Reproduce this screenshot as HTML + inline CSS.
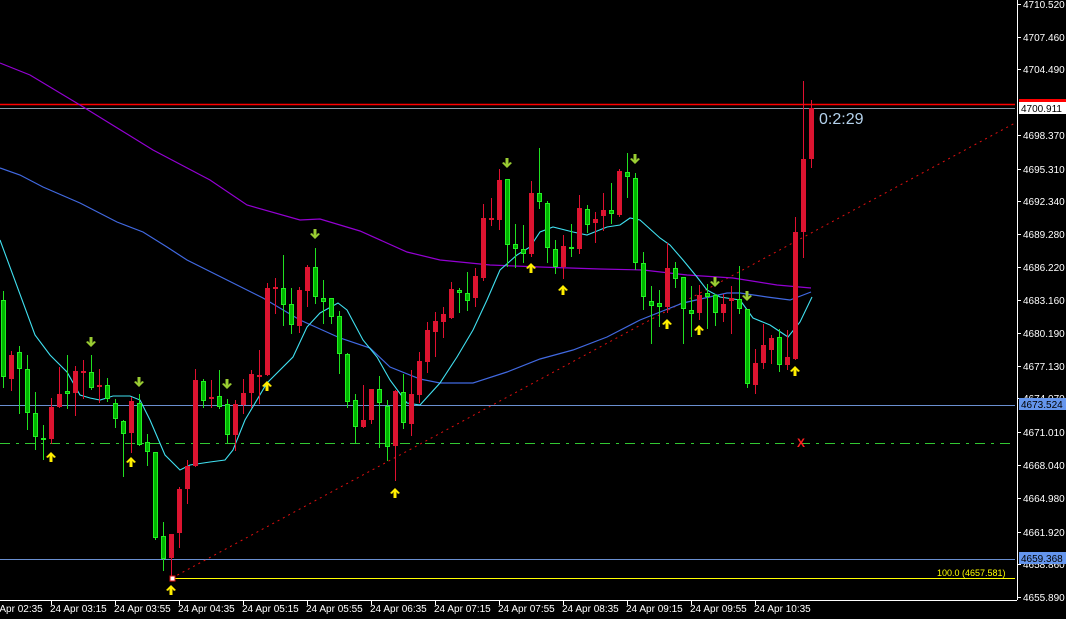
<!DOCTYPE html>
<html><head><meta charset="utf-8"><style>
html,body{margin:0;padding:0;background:#000;overflow:hidden}
svg{display:block}
text{font-family:"Liberation Sans",sans-serif}
</style></head><body>
<svg id="s" width="1066" height="619" xmlns="http://www.w3.org/2000/svg">
<rect width="1066" height="619" fill="#000"/>
<g id="lines"></g>
<line x1="0" y1="443.5" x2="1015" y2="443.5" stroke="#32c832" stroke-dasharray="10,6,3,6"/>
<line x1="0" y1="405.5" x2="1015" y2="405.5" stroke="#6a8fd0"/>
<line x1="0" y1="559.5" x2="1015" y2="559.5" stroke="#6a8fd0"/>
<line x1="172" y1="578.5" x2="1015" y2="578.5" stroke="#ffff00"/>
<line x1="0" y1="104.5" x2="1015" y2="104.5" stroke="#ff0000" stroke-width="1.5"/>
<line x1="0" y1="108.5" x2="1015" y2="108.5" stroke="#8a9aa8"/>
<line x1="172" y1="578" x2="1015" y2="123" stroke="#e01010" stroke-dasharray="2,4"/>
<polyline fill="none" stroke="#9400d3" stroke-width="1.2" points="0,63 30,75 80,105 153,150 210,180 247,205 300,220 320,219 360,231 407,252 440,260 490,265 540,267 600,269 643,270 687,275 733,278 777,285 811,288"/>
<polyline fill="none" stroke="#4169e1" stroke-width="1.2" points="0,168 20,175 43,187 80,203 117,222 143,232 167,247 187,260 227,280 263,298 300,320 340,338 370,348 390,367 420,379 440,383 473,383 507,372 540,359 573,350 607,337 640,320 683,303 727,293 740,293 767,297 790,300 811,292"/>
<polyline fill="none" stroke="#40e0f0" stroke-width="1.1" points="0,240 35,335 50,355 67,372 80,395 90,398 100,400 113,396 130,396 140,400 150,420 165,455 180,470 190,465 210,462 225,460 233,450 245,420 267,383 293,357 307,327 320,313 338,303 347,310 363,340 377,357 390,380 407,403 420,405 440,383 457,357 473,330 487,300 500,270 517,255 530,247 540,232 553,227 573,232 587,235 607,227 620,225 630,218 640,220 660,238 670,245 683,260 697,277 707,290 720,297 740,300 753,318 770,325 782,333 788,337 800,322 812,297"/>
<g id="c"></g>
<g id="ar"></g>
<rect x="170" y="576" width="5" height="5" fill="#fff" stroke="#e01010"/>
<text x="797" y="447" fill="#ff2020" font-size="12" font-weight="bold">X</text>
<text x="819" y="124" fill="#b4d2ec" font-size="16">0:2:29</text>
<text x="937" y="576" fill="#ffff00" font-size="9">100.0  (4657.581)</text>
<line x1="1017.5" y1="0" x2="1017.5" y2="600" stroke="#fff"/>
<line x1="0" y1="600.5" x2="1017" y2="600.5" stroke="#fff"/>
<g id="ax" fill="#fff" font-size="10"></g>
<rect x="1019" y="99" width="47" height="7" fill="#ff0000"/>
<rect x="1019" y="102" width="47" height="12" fill="#fff"/>
<text x="1021" y="112" fill="#000" font-size="10">4700.911</text>
<rect x="1019" y="398" width="47" height="12" fill="#6495ed"/>
<text x="1021" y="408" fill="#000" font-size="10">4673.524</text>
<rect x="1019" y="552" width="47" height="12" fill="#6495ed"/>
<text x="1021" y="562" fill="#000" font-size="10">4659.368</text>
</svg>
<script>
var NS="http://www.w3.org/2000/svg";
function el(p,t,a,txt){var e=document.createElementNS(NS,t);for(var k in a)e.setAttribute(k,a[k]);if(txt)e.textContent=txt;document.getElementById(p).appendChild(e);}
var D="g300,377,291,387 r355,379,351,390 g352,369,346,413 g369,413,355,429 g413,437,392,449 g438,439,425,459 r407,439,398,443 r394,407,367,407 g391,394,355,408 r371,393,366,415 r371,373,360,398 g372,388,355,389 r385,386,369,402 g385,399,378,401 g403,419,399,427 g421,434,420,476 r401,433,397,452 g403,445,394,445 g442,452,434,465 g452,538,452,539 g536,559,522,570 r534,558,534,579 r489,533,487,547 r466,489,460,503 r380,466,369,466 g381,401,379,407 r397,399,380,407 g396,407,370,408 g404,435,399,442 r404,435,400,450 r393,405,379,413 r374,393,370,407 r375,377,350,403 r288,375,283,375 r287,288,278,313 g288,305,255,325 g304,325,288,333 r290,326,287,332 r267,291,265,306 g267,297,248,303 g298,302,280,323 g298,317,298,323 g316,354,311,373 g354,402,353,407 g400,427,394,443 r420,427,385,427 r389,420,389,423 g389,403,376,447 g406,447,400,460 r391,446,390,480 g392,423,374,428 r394,424,370,435 r361,395,352,402 r330,362,322,372 r321,332,312,356 r314,322,307,337 r289,318,282,318 g290,293,288,312 g293,301,272,310 r276,298,268,306 r218,278,204,280 r218,219,198,225 r180,220,169,229 g179,245,179,266 g244,249,224,267 g249,254,225,262 r193,254,181,256 g193,202,148,208 g203,248,201,262 g249,267,240,273 r246,267,235,278 g247,248,224,256 r208,249,195,253 g209,225,205,232 r219,223,212,242 r210,216,193,230 g210,214,183,223 r171,215,169,216 g172,177,153,197 g178,263,173,269 g263,297,252,309 g301,306,286,343 g303,307,290,326 r268,307,243,312 g268,279,262,287 g277,309,277,343 g310,314,286,336 r295,313,285,319 g293,297,284,328 g295,313,294,325 r304,313,294,321 r298,301,286,333 g299,309,266,313 g309,384,309,387 r363,385,349,393 r345,363,324,368 r338,350,335,363 g337,365,329,371 r357,365,330,369 r232,359,217,359 r159,232,81,257 r108,159,100,167".split(" ");
D.forEach(function(s,i){var t=s[0],v=s.slice(1).split(",").map(Number),cx=3+8*i;
var col=t=="g"?"#00d800":"#dc1430";
el("c","line",{x1:cx+.5,x2:cx+.5,y1:v[2],y2:v[3]+1,stroke:t=="g"?"#20e020":"#e01030"});
var h=Math.max(v[1]-v[0],1);
if(t=="g")el("c","rect",{x:cx-1.5,y:v[0]+.5,width:4,height:Math.max(h-1,1),fill:"#00b400",stroke:"#22f022"});
else el("c","rect",{x:cx-2,y:v[0],width:5,height:Math.max(h,2),fill:col});});
var up=[[51,457],[131,462],[267,386],[395,493],[171,590],[531,268],[563,290],[667,324],[699,330],[795,371]];
var dn=[[91,342],[139,382],[227,384],[315,234],[507,163],[635,159],[715,282],[747,296]];
up.forEach(function(p){var x=p[0],y=p[1];el("ar","path",{d:"M"+x+" "+(y-5)+" L"+(x+5)+" "+y+" L"+(x+3)+" "+(y+1)+" L"+(x+1.5)+" "+(y-1)+" L"+(x+1.5)+" "+(y+5)+" L"+(x-1.5)+" "+(y+5)+" L"+(x-1.5)+" "+(y-1)+" L"+(x-3)+" "+(y+1)+" L"+(x-5)+" "+y+"Z",fill:"#ffee00"});});
dn.forEach(function(p){var x=p[0],y=p[1];el("ar","path",{d:"M"+x+" "+(y+5)+" L"+(x+5)+" "+y+" L"+(x+3)+" "+(y-1)+" L"+(x+1.5)+" "+(y+1)+" L"+(x+1.5)+" "+(y-5)+" L"+(x-1.5)+" "+(y-5)+" L"+(x-1.5)+" "+(y+1)+" L"+(x-3)+" "+(y-1)+" L"+(x-5)+" "+y+"Z",fill:"#9acd32"});});
var pr=[["4710.520",4],["4707.460",37],["4704.490",69],["4698.370",135],["4695.310",169],["4692.340",201],["4689.280",234],["4686.220",267],["4683.160",300],["4680.190",333],["4677.130",366],["4674.070",398],["4671.010",432],["4668.040",465],["4664.980",498],["4661.920",532],["4658.860",564],["4655.890",597]];
pr.forEach(function(p){el("ax","text",{x:1023,y:p[1]+4},p[0]);el("ax","line",{x1:1017,x2:1021,y1:p[1]+.5,y2:p[1]+.5,stroke:"#fff"});});
var tl=["24 Apr 02:35","24 Apr 03:15","24 Apr 03:55","24 Apr 04:35","24 Apr 05:15","24 Apr 05:55","24 Apr 06:35","24 Apr 07:15","24 Apr 07:55","24 Apr 08:35","24 Apr 09:15","24 Apr 09:55","24 Apr 10:35"];
tl.forEach(function(t,i){var x=51+64*(i-1);el("ax","text",{x:x-1,y:612},t);el("ax","line",{x1:x+.5,x2:x+.5,y1:600,y2:605,stroke:"#fff"});});
</script>
</body></html>
